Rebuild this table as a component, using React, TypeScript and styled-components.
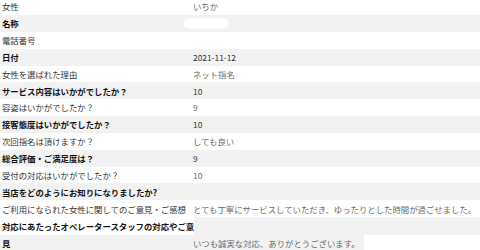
import React from 'react';
import styled, { createGlobalStyle } from 'styled-components';

const GlobalStyle = createGlobalStyle`
  html, body {
    margin: 0;
    padding: 0;
    background: #fff;
    overflow: hidden;
  }
  body {
    font-family: "Noto Sans CJK JP", "Liberation Sans", sans-serif;
  }
`;

type Tone = 'gray' | 'white';

const Sheet = styled.div`
  width: 480px;
  margin-top: -1.85px;
  font-size: 8.4px;
  line-height: 1;
`;

const Row = styled.div<{ $tone: Tone }>`
  display: flex;
  align-items: center;
  height: 16.85px;
  background: ${p => (p.$tone === 'gray' ? '#f2f2f2' : '#fff')};
`;

const Label = styled.div<{ $tone: Tone; $bg?: string }>`
  flex: 0 0 auto;
  width: 191px;
  padding-left: 2px;
  align-self: stretch;
  display: flex;
  align-items: center;
  white-space: nowrap;
  font-weight: ${p => (p.$tone === 'gray' ? 700 : 400)};
  color: ${p => (p.$tone === 'gray' ? '#111' : '#333')};
  background: ${p => p.$bg ?? 'transparent'};
`;

const Value = styled.div<{ $tone: Tone }>`
  flex: 1;
  white-space: nowrap;
  color: ${p => (p.$tone === 'gray' ? '#333' : '#6a6a6a')};
`;

const ValueChip = styled.span<{ $bg: string }>`
  display: inline-flex;
  align-items: center;
  height: 16.85px;
  background: ${p => p.$bg};
  padding-right: 4px;
`;

const Masked = styled.span`
  display: inline-block;
  width: 44px;
  height: 9px;
  margin-left: -9px;
  border-radius: 5px;
  background: #fff;
  box-shadow: 0 0 1px 0.5px #fff;
`;

type Item = { label: string; value?: React.ReactNode; tone: Tone };

const items: Item[] = [
  { label: '女性', value: 'いちか', tone: 'white' },
  { label: '名称', value: <Masked />, tone: 'gray' },
  { label: '電話番号', tone: 'white' },
  { label: '日付', value: '2021-11-12', tone: 'gray' },
  { label: '女性を選ばれた理由', value: 'ネット指名', tone: 'white' },
  { label: 'サービス内容はいかがでしたか？', value: '10', tone: 'gray' },
  { label: '容姿はいかがでしたか？', value: '9', tone: 'white' },
  { label: '接客態度はいかがでしたか？', value: '10', tone: 'gray' },
  { label: '次回指名は頂けますか？', value: 'しても良い', tone: 'white' },
  { label: '総合評価・ご満足度は？', value: '9', tone: 'gray' },
  { label: '受付の対応はいかがでしたか？', value: '10', tone: 'white' },
  { label: '当店をどのようにお知りになりましたか?', tone: 'gray' },
  {
    label: 'ご利用になられた女性に関してのご意見・ご感想',
    value: 'とても丁寧にサービスしていただき、ゆったりとした時間が過ごせました。',
    tone: 'white',
  },
];

export default function App() {
  return (
    <>
      <GlobalStyle />
      <Sheet>
        {items.map((it, i) => (
          <Row key={i} $tone={it.tone}>
            <Label $tone={it.tone}>{it.label}</Label>
            <Value $tone={it.tone}>{it.value}</Value>
          </Row>
        ))}
        {/* long label wraps onto a second line */}
        <Row $tone="gray" style={{ height: '17.7px' }}>
          <Label $tone="gray" $bg="#fff" style={{ width: 'auto', paddingRight: '0' }}>
            対応にあたったオペレータースタッフの対応やご意
          </Label>
          <Value $tone="gray" />
        </Row>
        <Row $tone="white">
          <Label $tone="gray" $bg="#f2f2f2">見</Label>
          <Value $tone="white">
            <ValueChip $bg="#f2f2f2">いつも誠実な対応、ありがとうございます。</ValueChip>
          </Value>
        </Row>
      </Sheet>
    </>
  );
}
